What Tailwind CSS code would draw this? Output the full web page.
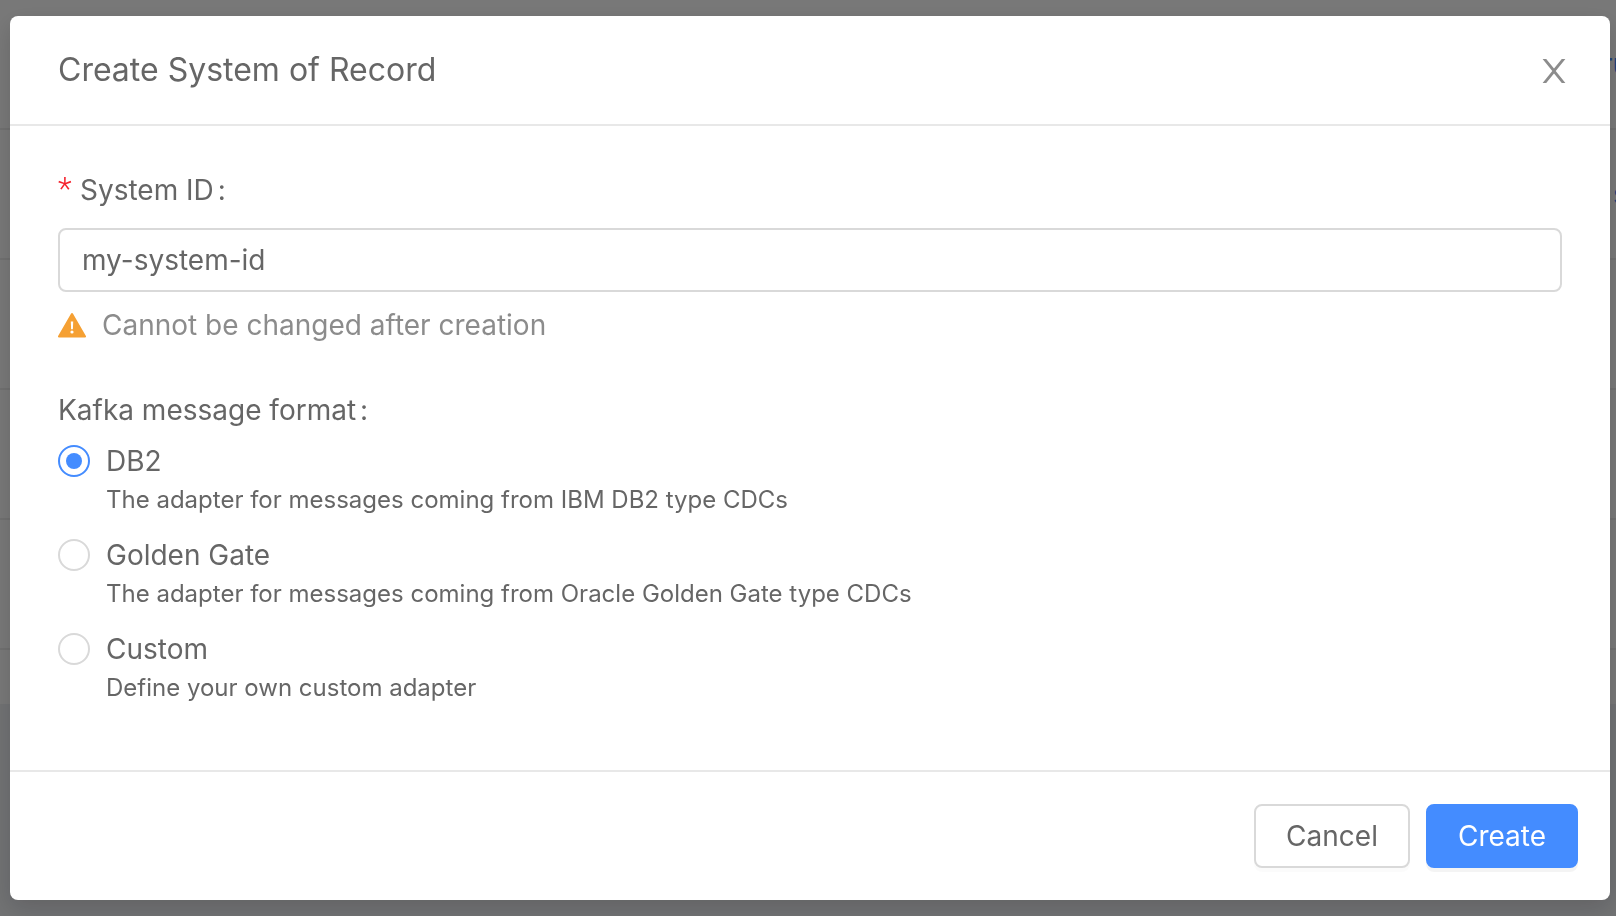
<!DOCTYPE html>
<html lang="en">
<head>
<meta charset="utf-8">
<meta name="viewport" content="width=device-width, initial-scale=1">
<title>Create System of Record</title>
<script src="https://cdn.jsdelivr.net/npm/@tailwindcss/browser@4"></script>
</head>
<body class="min-h-screen overflow-hidden bg-[#f0f2f5] font-['Inter',sans-serif] text-[28px] leading-[44px] text-[#666666]">

  <!-- Page behind the dialog -->
  <div aria-hidden="true" class="overflow-hidden bg-white text-[#448cff]">
    <div class="flex h-[130px] items-center justify-end border-b-2 border-[#ededed]"><span class="w-3.5">ru</span></div>
    <div class="flex h-[130px] items-center justify-end border-b-2 border-[#ededed]"><span class="w-[3px]">s</span></div>
    <div class="h-[130px] border-b-2 border-[#ededed]"></div>
    <div class="h-[130px] border-b-2 border-[#ededed]"></div>
    <div class="h-[130px] border-b-2 border-[#ededed]"></div>
    <div class="h-[54px]"></div>
  </div>

  <div class="fixed inset-0 overflow-auto bg-black/53 py-4 pr-1.5 pl-2.5">
    <section role="dialog" aria-modal="true" aria-labelledby="dialog-title" class="rounded-lg bg-white shadow-[0_8px_24px_rgba(0,0,0,0.15)]">
      <header class="flex items-center justify-between border-b-2 border-[#e8e8e8] py-8 pr-11 pl-12">
        <h1 id="dialog-title" class="text-[32px] leading-[44px]">Create System of Record</h1>
        <button type="button" aria-label="Close" class="pt-0.5 text-[#8c8c8c]">
          <svg class="h-6 w-6" viewBox="0 0 24 24" fill="currentColor"><path d="M.6 0H4.2L12 9.6 19.8 0h3.6L13.7 12l9.7 12H19.8L12 14.4 4.2 24H.6l9.7-12Z"/></svg>
        </button>
      </header>

      <form id="system-form" class="px-12 pt-[42px] pb-[65px]">
        <label for="system-id" class="flex gap-2"><span class="w-3.5 font-['Roboto',sans-serif] text-[32px] leading-[40px] font-light text-[#f5222d]">*</span><span>System ID<span class="ml-1">:</span></span></label>
        <input id="system-id" type="text" value="my-system-id" class="mt-4 block h-16 w-full rounded-lg border-2 border-[#d9d9d9] px-[22px] outline-none">
        <p class="mt-[11px] flex items-center gap-4 text-[#8c8c8c]">
          <svg class="h-7 w-7" viewBox="0 0 28 28" aria-hidden="true"><path fill="#f5a033" d="M13.1 2.5a1 1 0 0 1 1.8 0L27.9 25.1a.9.9 0 0 1-.8 1.4H.9a.9.9 0 0 1-.8-1.4Z"/><path fill="#fff" d="M12.8 10.6h2.4l-.3 7.6h-1.8Z"/><circle cx="14" cy="21" r="1.6" fill="#fff"/></svg>
          Cannot be changed after creation
        </p>

        <fieldset class="mt-[41px]">
          <legend>Kafka message format<span class="ml-1">:</span></legend>
          <div class="mt-[7px] flex flex-col gap-4">
            <label class="grid grid-cols-[32px_1fr] items-center gap-x-4">
              <input type="radio" name="format" checked class="size-8 appearance-none rounded-full border-2 border-[#d9d9d9] bg-white bg-clip-content p-1.5 checked:border-[#448cff] checked:bg-[#448cff]">
              <span>DB2</span>
              <span class="col-start-2 text-[24px] leading-[34px]">The adapter for messages coming from IBM DB2 type CDCs</span>
            </label>
            <label class="grid grid-cols-[32px_1fr] items-center gap-x-4">
              <input type="radio" name="format" class="size-8 appearance-none rounded-full border-2 border-[#d9d9d9] bg-white bg-clip-content p-1.5 checked:border-[#448cff] checked:bg-[#448cff]">
              <span>Golden Gate</span>
              <span class="col-start-2 text-[24px] leading-[34px]">The adapter for messages coming from Oracle Golden Gate type CDCs</span>
            </label>
            <label class="grid grid-cols-[32px_1fr] items-center gap-x-4">
              <input type="radio" name="format" class="size-8 appearance-none rounded-full border-2 border-[#d9d9d9] bg-white bg-clip-content p-1.5 checked:border-[#448cff] checked:bg-[#448cff]">
              <span>Custom</span>
              <span class="col-start-2 text-[24px] leading-[34px]">Define your own custom adapter</span>
            </label>
          </div>
        </fieldset>
      </form>

      <footer class="flex justify-end gap-4 border-t-2 border-[#e8e8e8] p-8">
        <button type="button" class="h-16 rounded-lg border-2 border-[#d9d9d9] bg-white px-[30px] shadow-[0_4px_0_rgba(0,0,0,0.016)]">Cancel</button>
        <button type="submit" form="system-form" class="h-16 rounded-lg border-2 border-[#448cff] bg-[#448cff] px-[30px] text-white shadow-[0_4px_0_rgba(0,0,0,0.045)]">Create</button>
      </footer>
    </section>
  </div>
</body>
</html>
